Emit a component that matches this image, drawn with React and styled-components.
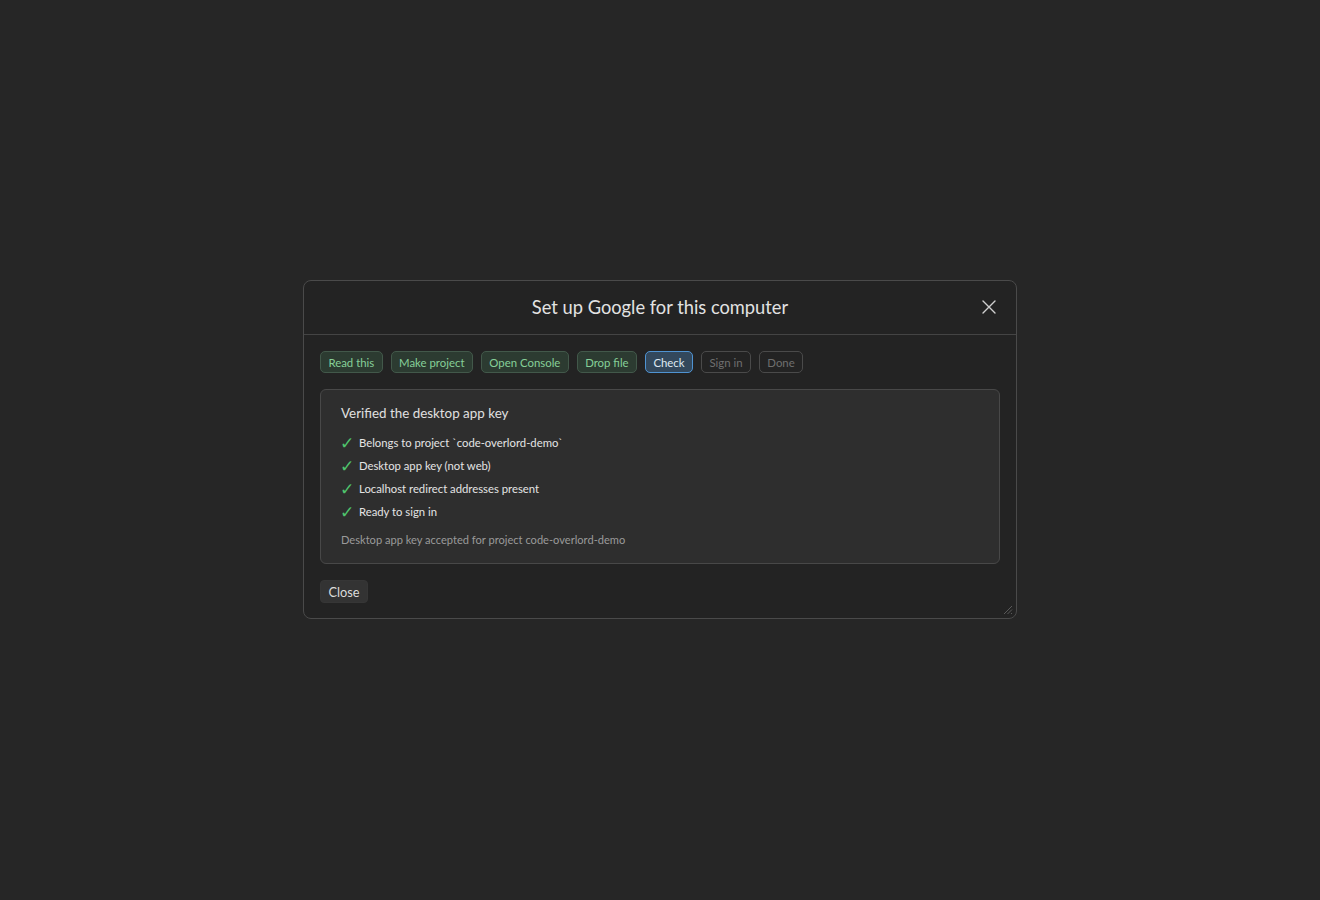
import React from "react";
import styled, { createGlobalStyle } from "styled-components";

const Global = createGlobalStyle`
  html, body { margin: 0; padding: 0; background: #262626; }
  body { font-family: Lato, "Noto Sans", sans-serif; }
  * { box-sizing: border-box; }
`;

const Page = styled.div`
  width: 1320px;
  height: 900px;
  display: flex;
  justify-content: center;
  padding-top: 280px;
`;

const Dialog = styled.div`
  position: relative;
  width: 714px;
  height: 339px;
  background: #232323;
  border: 1px solid #4a4a4a;
  border-radius: 8px;
  display: flex;
  flex-direction: column;
`;

const Header = styled.div`
  height: 54px;
  border-bottom: 1px solid #444;
  display: flex;
  align-items: center;
  justify-content: center;
  position: relative;
`;

const Title = styled.h1`
  margin: 0 0 1px 0;
  font-size: 18.3px;
  line-height: 24px;
  font-weight: 400;
  color: #e2e2e2;
`;

const CloseX = styled.button`
  position: absolute;
  right: 18px;
  top: 17px;
  width: 18px;
  height: 18px;
  padding: 0;
  border: none;
  background: none;
  color: #cfcfcf;
  display: flex;
  align-items: center;
  justify-content: center;
`;

const Body = styled.div`
  padding: 16px 16px 0 16px;
  display: flex;
  flex-direction: column;
`;

const Steps = styled.div`
  display: flex;
  gap: 8px;
`;

const tones = {
  done: { bg: "#2c3b31", border: "#42584a", color: "#86cf98" },
  active: { bg: "#33485c", border: "#4f93d2", color: "#dfe8f2" },
  todo: { bg: "transparent", border: "#4a4a4a", color: "#6f6f6f" },
};

const Step = styled.span`
  height: 22px;
  padding: 0 7.4px;
  display: inline-flex;
  align-items: center;
  font-size: 11.4px;
  border-radius: 5px;
  background: ${(p) => tones[p.$tone].bg};
  border: 1px solid ${(p) => tones[p.$tone].border};
  color: ${(p) => tones[p.$tone].color};
`;

const Panel = styled.div`
  margin-top: 16px;
  background: #2e2e2e;
  border: 1px solid #484848;
  border-radius: 6px;
  padding: 14px 20px 15px 20px;
`;

const PanelTitle = styled.div`
  font-size: 13.4px;
  line-height: 18px;
  color: #e0e0e0;
  margin-bottom: 9px;
`;

const List = styled.ul`
  list-style: none;
  margin: 0;
  padding: 0;
  display: flex;
  flex-direction: column;
`;

const Item = styled.li`
  height: 23px;
  display: flex;
  align-items: center;
  font-size: 11.3px;
  color: #e4e4e4;
`;

const Tick = styled.span`
  width: 18px;
  margin-left: -1px;
  margin-right: 1px;
  color: #4fc46c;
  font-size: 17px;
  line-height: 20px;
  font-weight: 700;
  font-family: "DejaVu Sans", sans-serif;
`;

const Note = styled.div`
  margin-top: 9px;
  font-size: 11.1px;
  line-height: 16px;
  color: #9a9a9a;
`;

const Footer = styled.div`
  padding: 16px 16px 0 16px;
`;

const Button = styled.button`
  height: 23px;
  padding: 0 7.5px;
  font-family: inherit;
  font-size: 12.8px;
  color: #dcdcdc;
  background: #333333;
  border: 1px solid #363636;
  border-radius: 4px;
`;

const Grip = styled.svg`
  position: absolute;
  right: 3px;
  bottom: 3px;
`;

const steps = [
  ["Read this", "done"],
  ["Make project", "done"],
  ["Open Console", "done"],
  ["Drop file", "done"],
  ["Check", "active"],
  ["Sign in", "todo"],
  ["Done", "todo"],
];

const items = [
  "Belongs to project `code-overlord-demo`",
  "Desktop app key (not web)",
  "Localhost redirect addresses present",
  "Ready to sign in",
];

export default function App() {
  return (
    <>
      <Global />
      <Page>
        <Dialog>
          <Header>
            <Title>Set up Google for this computer</Title>
            <CloseX aria-label="Close">
              <svg width="14" height="14" viewBox="0 0 14 14">
                <path d="M1 1L13 13M13 1L1 13" stroke="currentColor" strokeWidth="1.4" strokeLinecap="round" />
              </svg>
            </CloseX>
          </Header>
          <Body>
            <Steps>
              {steps.map(([label, tone]) => (
                <Step key={label} $tone={tone}>{label}</Step>
              ))}
            </Steps>
            <Panel>
              <PanelTitle>Verified the desktop app key</PanelTitle>
              <List>
                {items.map((t) => (
                  <Item key={t}>
                    <Tick>✓</Tick>
                    {t}
                  </Item>
                ))}
              </List>
              <Note>Desktop app key accepted for project code-overlord-demo</Note>
            </Panel>
          </Body>
          <Footer>
            <Button>Close</Button>
          </Footer>
          <Grip width="12" height="12" viewBox="0 0 12 12">
            <path d="M11 3L3 11M11 6.5L6.5 11M11 10L10 11" stroke="#5a5a5a" strokeWidth="1" />
          </Grip>
        </Dialog>
      </Page>
    </>
  );
}
